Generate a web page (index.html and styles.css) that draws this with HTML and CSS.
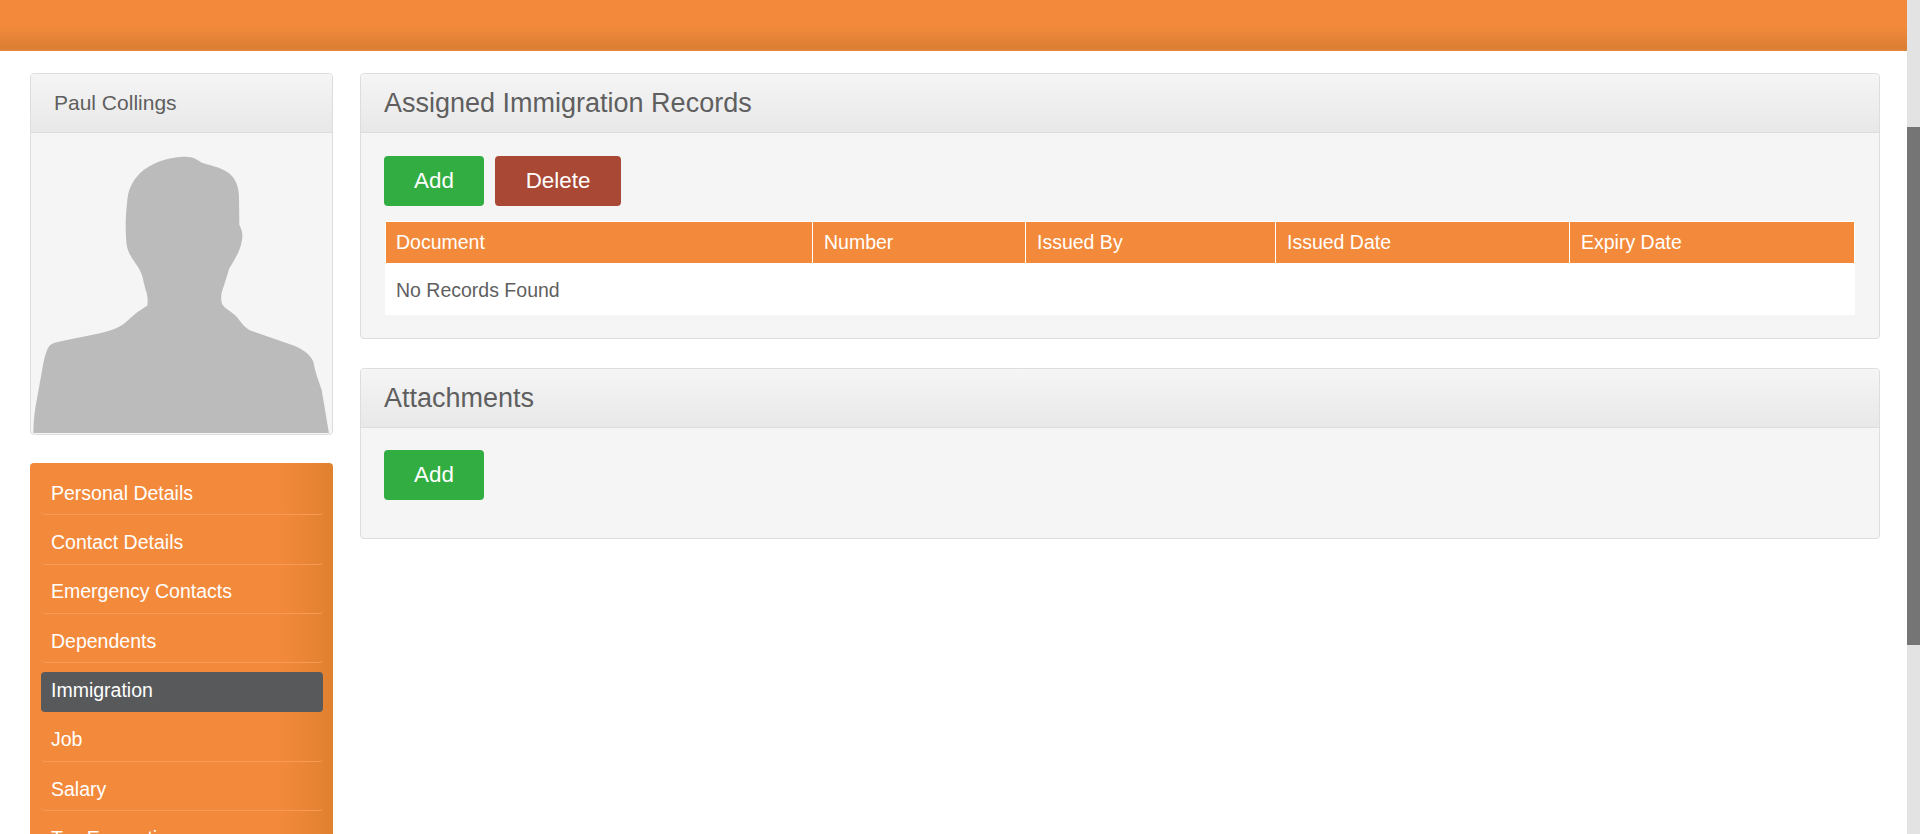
FILE: index.html
```html
<!DOCTYPE html>
<html lang="en">
<head>
<meta charset="utf-8">
<title>Immigration</title>
<link rel="stylesheet" href="styles.css">
</head>
<body>
<div class="viewport">
  <div class="page">
    <header class="topbar"></header>
    <div class="content">
      <aside class="sidebar">
        <section class="profile">
          <h2 class="profile-name">Paul Collings</h2>
          <div class="profile-photo">
            <svg class="silhouette" viewBox="99 399 891 900" aria-hidden="true">
              <path d="M100 1299 C100 1260 105 1225 112 1190 L130 1090 C136 1062 142 1045 150 1036 C156 1029 170 1027 190 1022 L300 1000 C340 990 365 980 385 960 C405 940 420 930 442 917 C444 900 443 885 437 870 C430 845 428 825 418 808 C405 785 385 765 380 735 C376 700 376 650 381 610 C384 570 395 545 420 520 C450 490 500 472 550 470 C580 469 590 478 605 488 C625 495 660 500 685 518 C708 535 716 560 717 590 L718 675 C726 690 730 705 725 725 C720 755 700 785 688 805 C680 830 675 850 668 868 C662 885 662 905 668 915 C680 930 695 935 710 950 C725 968 735 985 755 993 L870 1033 C905 1045 930 1062 940 1085 C945 1115 955 1140 965 1170 C972 1210 980 1260 987 1299 Z"/>
            </svg>
          </div>
        </section>
        <nav class="menu">
          <a class="menu-item">Personal Details</a>
          <a class="menu-item">Contact Details</a>
          <a class="menu-item">Emergency Contacts</a>
          <a class="menu-item">Dependents</a>
          <a class="menu-item active">Immigration</a>
          <a class="menu-item">Job</a>
          <a class="menu-item">Salary</a>
          <a class="menu-item">Tax Exemptions</a>
        </nav>
      </aside>
      <main class="main">
        <section class="panel">
          <h2 class="panel-title">Assigned Immigration Records</h2>
          <div class="panel-body">
            <div class="actions">
              <button class="btn btn-add" type="button">Add</button>
              <button class="btn btn-delete" type="button">Delete</button>
            </div>
            <table class="records">
              <thead>
                <tr>
                  <th class="col-document">Document</th>
                  <th class="col-number">Number</th>
                  <th class="col-issuer">Issued By</th>
                  <th class="col-issued">Issued Date</th>
                  <th class="col-expiry">Expiry Date</th>
                </tr>
              </thead>
              <tbody>
                <tr><td colspan="5">No Records Found</td></tr>
              </tbody>
            </table>
          </div>
        </section>
        <section class="panel">
          <h2 class="panel-title">Attachments</h2>
          <div class="panel-body panel-body-attachments">
            <div class="actions">
              <button class="btn btn-add" type="button">Add</button>
            </div>
          </div>
        </section>
      </main>
    </div>
  </div>
  <div class="scrollbar"><div class="scrollbar-thumb"></div></div>
</div>
</body>
</html>
```

FILE: styles.css
```css
* { box-sizing: border-box; }
html, body { margin: 0; padding: 0; height: 100%; overflow: hidden; }
body {
  background: #fff;
  color: #5f5f5f;
  font-family: "Liberation Sans", Arial, sans-serif;
  font-size: 19.5px;
}
.viewport { display: flex; height: 834px; overflow: hidden; }
.page { flex: 1; min-width: 0; }
.scrollbar { width: 13px; background: #e3e3e3; }
.scrollbar-thumb { margin-top: 127px; height: 518px; background: #757575; }

.topbar {
  height: 51px;
  background: linear-gradient(to bottom, #f38a3b 0%, #f38a3b 50%, #db7e33 96%, #e88a3c 100%);
}
.content { display: flex; gap: 27px; padding: 22px 27px 0 30px; align-items: flex-start; }
.sidebar { flex: 0 0 303px; display: flex; flex-direction: column; gap: 28px; }
.main { flex: 1; min-width: 0; display: flex; flex-direction: column; gap: 29px; }

.profile {
  height: 362px;
  border: 1px solid #ddd;
  border-radius: 4px;
  background: #f5f5f5;
  overflow: hidden;
}
.profile-name {
  margin: 0;
  height: 59px;
  padding-left: 23px;
  display: flex;
  align-items: center;
  font-size: 21px;
  font-weight: 400;
  background: linear-gradient(to bottom, #f5f5f5, #e8e8e8);
  border-bottom: 1px solid #ddd;
}
.profile-photo { padding: 0 2px; height: 301px; }
.silhouette { display: block; width: 297px; height: 300px; fill: #bbb; }

.menu {
  height: 500px;
  padding: 3px 10px 0 11px;
  border-radius: 4px 4px 0 0;
  background: linear-gradient(to right, #f38a3b 0%, #f38a3b 82%, #e0812f 100%);
  display: flex;
  flex-direction: column;
}
.menu-item {
  flex: 0 0 49.33px;
  padding: 13.6px 0 0 10px;
  color: #fff;
  line-height: 27px;
  border-bottom: 1px solid #f69a55;
  border-radius: 0 0 4px 4px;
}
.menu-item.active {
  position: relative;
  isolation: isolate;
  padding-top: 14px;
  border-bottom: 0;
}
.menu-item.active::before {
  content: "";
  position: absolute;
  z-index: -1;
  left: 0;
  right: 0;
  top: 9px;
  height: 40px;
  border-radius: 4px;
  background: #58595b;
}

.panel {
  border: 1px solid #ddd;
  border-radius: 4px;
  background: #f5f5f5;
  overflow: hidden;
}
.panel-title {
  margin: 0;
  height: 59px;
  padding: 0 23px;
  display: flex;
  align-items: center;
  font-size: 27px;
  font-weight: 400;
  background: linear-gradient(to bottom, #f5f5f5, #e8e8e8);
  border-bottom: 1px solid #ddd;
}
.panel-body { padding: 23px; }
.panel-body-attachments { padding-top: 22px; padding-bottom: 38px; }
.actions { display: flex; gap: 11px; }
.btn {
  height: 50px;
  border: 0;
  border-radius: 4px;
  color: #fff;
  font-family: inherit;
  font-size: 22.4px;
  padding: 0;
}
.btn-add { width: 100px; background: #32ad41; }
.btn-delete { width: 126px; background: #a94834; }

.records {
  width: 1470px;
  margin: 15px 0 0 1px;
  border: 1px solid #fff;
  border-width: 1px 1px 0 1px;
  border-spacing: 0;
  table-layout: fixed;
  background: #fff;
}
.records th {
  height: 41px;
  padding: 0 10px 1px 11px;
  background: #f38a3b;
  color: #fff;
  font-weight: 400;
  text-align: left;
  border-right: 1px solid #fff;
}
.records th:first-child { padding-left: 10px; }
.records th:last-child { border-right: 0; }
.records td { height: 52px; padding: 2px 10px 0; }
.col-document { width: 427px; }
.col-number { width: 213px; }
.col-issuer { width: 250px; }
.col-issued { width: 294px; }
```
